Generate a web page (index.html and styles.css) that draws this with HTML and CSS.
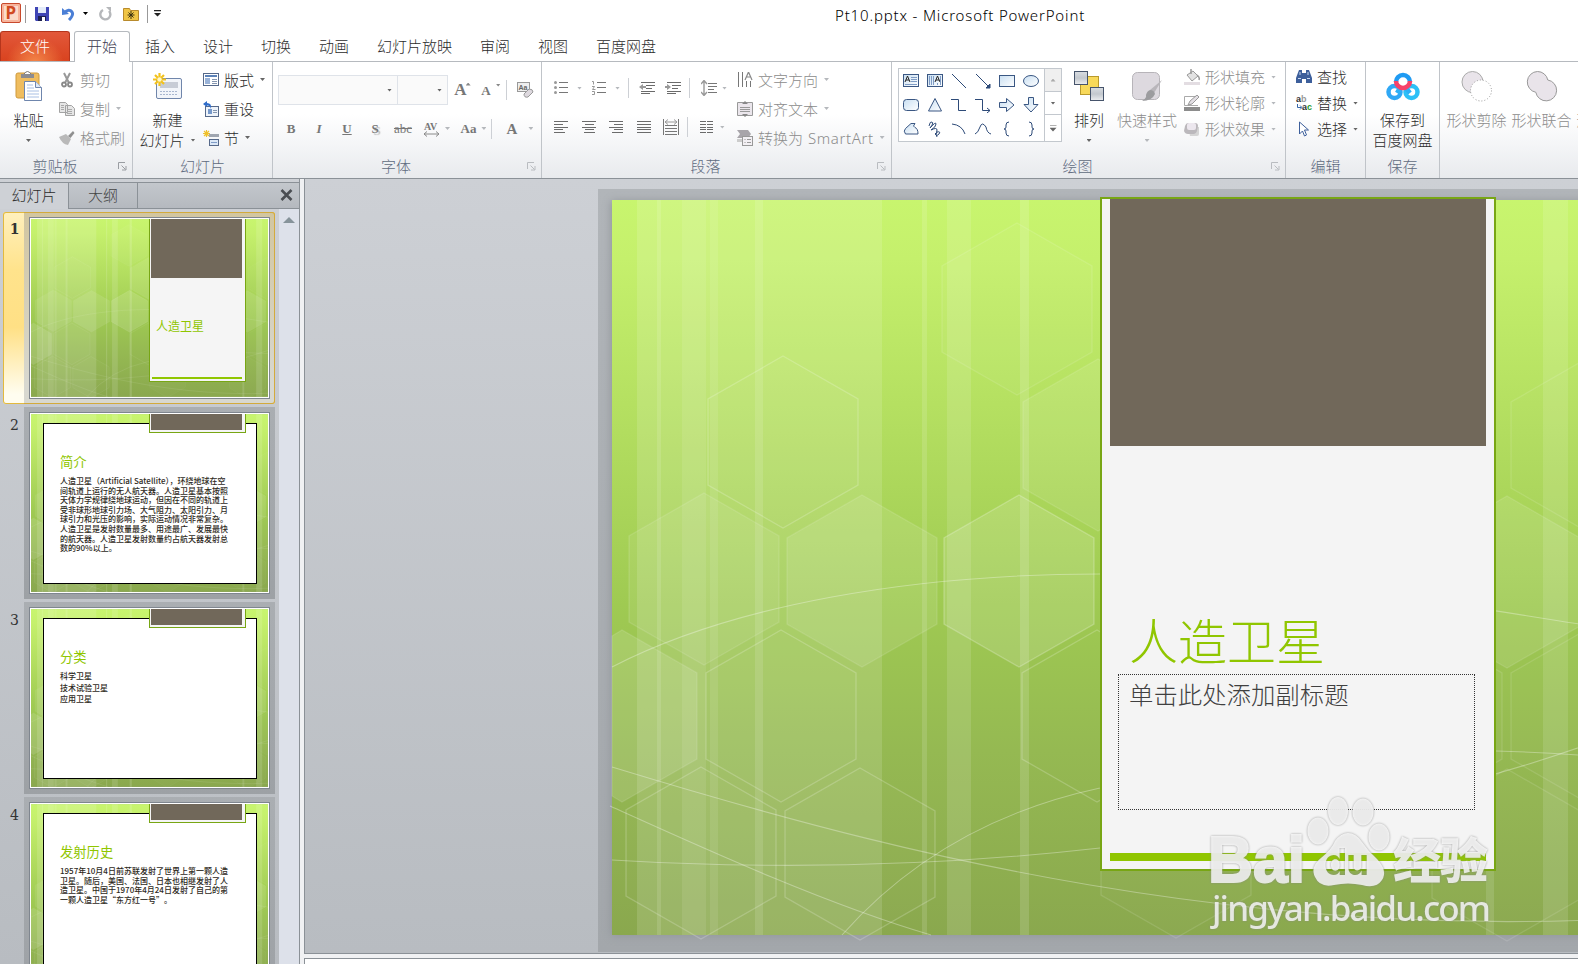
FILE: index.html
```html
<!DOCTYPE html>
<html lang="zh-CN">
<head>
    <meta charset="UTF-8">
    <title>Pt10.pptx - Microsoft PowerPoint</title>
    <link rel="stylesheet" href="styles.css">
</head>
<body>
    <!-- Shared slide background -->
    <svg class="defs" width="0" height="0">
        <defs>
            <linearGradient id="green" x1="0" y1="0" x2="0" y2="1">
                <stop offset="0" stop-color="#c8f56e"/>
                <stop offset="0.08" stop-color="#c5f06c"/>
                <stop offset="0.55" stop-color="#9fca52"/>
                <stop offset="0.75" stop-color="#95b952"/>
                <stop offset="1" stop-color="#8aa84e"/>
            </linearGradient>
            <linearGradient id="shape" x1="0" y1="0" x2="1" y2="1">
                <stop offset="0" stop-color="#c9dff2"/>
                <stop offset="1" stop-color="#fff"/>
            </linearGradient>
            <linearGradient id="steel" x1="0" y1="0" x2="0" y2="1">
                <stop offset="0" stop-color="#d9dde2"/>
                <stop offset="0.5" stop-color="#c3c8ce"/>
                <stop offset="1" stop-color="#eceef0"/>
            </linearGradient>
            <path id="hex" d="M0-86L75-43V43L0 86L-75 43V-43Z"/>
            <symbol id="slide-bg" viewBox="0 0 980 735" overflow="visible">
                <rect width="980" height="735" fill="url(#green)"/>
                <g fill="#fff">
                    <rect x="25" width="245" height="735" opacity=".13"/>
                    <rect x="45" width="4" height="735" opacity=".12"/>
                    <rect x="70" width="24" height="735" opacity=".09"/>
                    <rect x="98" width="8" height="735" opacity=".09"/>
                    <rect x="143" width="8" height="735" opacity=".12"/>
                    <rect x="310" width="5" height="735" opacity=".13"/>
                    <rect x="335" width="24" height="735" opacity=".12"/>
                    <rect x="408" width="9" height="735" opacity=".14"/>
                    <rect x="874" width="8" height="735" opacity=".12"/>
                    <rect x="931" width="25" height="735" opacity=".12"/>
                </g>
                <g fill="#fff" fill-opacity=".02" stroke="#fff" stroke-opacity=".12" stroke-width="1.3">
                    <use href="#hex" x="405" y="109" fill-opacity=".04"/>
                    <use href="#hex" x="171" y="242" stroke-opacity=".2"/>
                    <use href="#hex" x="92" y="379" fill-opacity=".08"/>
                    <use href="#hex" x="250" y="381" fill-opacity=".1"/>
                    <use href="#hex" x="407" y="381" fill-opacity=".13" stroke-opacity=".24"/>
                    <use href="#hex" x="486" y="245" fill-opacity=".09"/>
                    <use href="#hex" x="169" y="516" stroke-opacity=".2"/>
                    <use href="#hex" x="485" y="516" fill-opacity="0" stroke-opacity=".2"/>
                    <use href="#hex" x="89" y="653" stroke-opacity=".2"/>
                    <use href="#hex" x="248" y="654" stroke-opacity=".2"/>
                    <use href="#hex" x="564" y="652"/>
                    <use href="#hex" x="895" y="655"/>
                    <use href="#hex" x="815" y="516"/>
                    <path d="M981 430L974 430L899 473V559L974 602L981 600"/>
                    <use href="#hex" x="895" y="382" fill-opacity=".1"/>
                    <path d="M981 159L974 159L899 202V288L974 331L981 330"/>
                    <path d="M0 436L10 430L85 473V559L10 602L0 596Z" fill-opacity=".12"/>
                </g>
                <g fill="none" stroke="#fff" stroke-opacity=".32" stroke-width="1.1">
                    <path d="M0 467C120 405 300 374 488 374S800 398 980 426"/>
                    <path d="M0 567C190 625 330 660 478 685S800 727 980 720"/>
                    <path d="M-2 606C80 643 210 703 319 735"/>
                    <path d="M0 660Q250 675 488 648Q780 615 980 543"/>
                    <path d="M230 735Q330 622 488 588Q700 535 980 556"/>
                </g>
            </symbol>
        </defs>
    </svg>

    <header class="titlebar">
        <div class="quick">
            <svg width="21" height="21" viewBox="0 0 21 21"><rect x=".5" y=".5" width="19" height="19" rx="1.5" fill="#f7b49c" stroke="#c8492c"/><path d="M3 3h14v14H3z" fill="#fbdccb"/><text x="4.500" y="16" class="logo-p">P</text></svg>
            <span class="qsep"></span>
            <svg class="q-save" width="14" height="14" viewBox="0 0 14 14"><path d="M0 0h14v14H1l-1-1z" fill="#3f45b5"/><path d="M3 0h8v6H3z" fill="#e4ecf9"/><path d="M3 9h8v5H3z" fill="#1d2050"/><path d="M7 10h3v4H7z" fill="#fff"/></svg>
            <svg class="q-undo" width="13" height="14" viewBox="0 0 13 14"><path d="M2 6q5-5 8-1 2 3-3 8" fill="none" stroke="#4b7fd6" stroke-width="3"/><path d="M0 1v7l7-1z" fill="#4b7fd6"/></svg>
            <i class="dn black"></i>
            <svg class="q-redo" width="13" height="14" viewBox="0 0 13 14"><path d="M4 3a5 5 0 1 0 6 1" fill="none" stroke="#b5b7ba" stroke-width="2.4"/><path d="M7 0h5v5z" fill="#b5b7ba"/></svg>
            <svg class="q-folder" width="16" height="14" viewBox="0 0 16 14"><path d="M.5 1.500h6l1 2h8v10H.5z" fill="#f0c545" stroke="#b88a2c"/><path d="M8 4v8M4.500 8h7M5.500 5.500l5 5M10.500 5.500l-5 5" stroke="#3b3210"/></svg>
            <span class="qsep"></span>
            <svg width="7" height="7" viewBox="0 0 7 7"><path d="M0 0h7v1.300H0zM0 3h7L3.500 6.500z" fill="#222"/></svg>
        </div>
        <div class="doc-title">Pt10.pptx - Microsoft PowerPoint</div>
    </header>

    <nav class="tabs">
        <span class="file-tab">文件</span>
        <span class="tab active">开始</span>
        <span class="tab">插入</span>
        <span class="tab">设计</span>
        <span class="tab">切换</span>
        <span class="tab">动画</span>
        <span class="tab">幻灯片放映</span>
        <span class="tab">审阅</span>
        <span class="tab">视图</span>
        <span class="tab">百度网盘</span>
    </nav>

    <div class="ribbon">
        <section class="group g-clip">
            <div class="tools">
                <div class="big">
                    <svg width="28" height="32" viewBox="0 0 28 32"><rect x="1" y="3" width="23" height="25" rx="2" fill="#efbd5f" stroke="#cf9a3d"/><path d="M6 4h13v4H6z" fill="#8c8c90"/><path d="M9 4q3.500-5 7 0" fill="#fff" stroke="#777"/><path d="M9.500 11.500h11l6 6v13h-17z" fill="#fff" stroke="#6f86ad"/><path d="M20.500 11.500v6h6" fill="#dfe8f5" stroke="#6f86ad"/><path d="M12 15h6M12 18h7M12 21h12M12 24h12M12 27h12" stroke="#a9c0e4"/></svg>
                    <b>粘贴</b><i class="dn"></i>
                </div>
                <div class="stack">
                    <div class="row off"><svg width="16" height="16" viewBox="0 0 16 16"><path d="M5 1l5 10M11 1L6 11" stroke="#999" stroke-width="2"/><circle cx="5" cy="12.500" r="2" fill="none" stroke="#888" stroke-width="1.800"/><circle cx="11" cy="12.500" r="2" fill="none" stroke="#888" stroke-width="1.800"/></svg>剪切</div>
                    <div class="row off"><svg width="16" height="16" viewBox="0 0 16 16"><path d="M.5 1.500h6l2 2v8h-8zM6.500 4.500h6l3 3v7h-9z" fill="#e6e6e6" stroke="#a3a3a3"/><path d="M2 4.500h3M2 6.500h3M2 8.500h3M8 8.500h5M8 10.500h5M8 12.500h5" stroke="#aaa"/></svg>复制<i class="dn"></i></div>
                    <div class="row off"><svg width="16" height="16" viewBox="0 0 16 16"><path d="M0 7l7-3 5 5-3 6q-6-1-9-8z" fill="#b9b9b9"/><path d="M9 6l5-5 1.500 2-4 5z" fill="#8f8f8f"/></svg>格式刷</div>
                </div>
            </div>
            <div class="label">剪贴板<svg class="launch" width="9" height="9" viewBox="0 0 9 9"><path d="M.5 7V.5H7M3.500 3.500l4 4M8 4v4H4" fill="none" stroke="currentColor"/></svg></div>
        </section>

        <section class="group g-slides">
            <div class="tools">
                <div class="big">
                    <svg width="30" height="32" viewBox="0 0 30 32"><rect x="3.500" y="8.500" width="25" height="20" rx="1.500" fill="#f2f5fa" stroke="#7086ab"/><path d="M7 12h18v6H7z" fill="#c7ccd6"/><path d="M7 21.500h18M7 24.500h18" stroke="#a9b7d0" stroke-dasharray="2 1"/><path d="M6.500 3v13M0 9.500h13M2 5l9 9M11 5l-9 9" stroke="#f3c21c" stroke-width="2.200"/><circle cx="6.500" cy="9.500" r="2.200" fill="#fff8c8"/></svg>
                    <b>新建</b><b class="two">幻灯片<i class="dn"></i></b>
                </div>
                <div class="stack">
                    <div class="row"><svg width="16" height="16" viewBox="0 0 16 16"><rect x=".5" y="1.500" width="15" height="12" fill="#fff" stroke="#56698a"/><path d="M2 3h12v2H2z" fill="#5c82b8"/><path d="M2 6h5v6H2z" fill="#9ab3d8"/><path d="M9 7.500h5M9 9.500h5M9 11.500h5" stroke="#8596b0"/></svg>版式<i class="dn"></i></div>
                    <div class="row"><svg width="16" height="16" viewBox="0 0 16 16"><rect x="2.500" y="5.500" width="13" height="10" fill="#eef3fa" stroke="#56698a"/><path d="M5 8h4v5H5z" fill="#7699cb"/><path d="M10 9.500h4M10 11.500h4" stroke="#8596b0"/><path d="M0 3l4-3v2q5 0 4 6Q7 4 4 4.500V6z" fill="#2f6cc9"/></svg>重设</div>
                    <div class="row"><svg width="16" height="16" viewBox="0 0 16 16"><path d="M6 4h10v3H6z" fill="#a0a6b0"/><rect x="6.500" y="9.500" width="9" height="6" fill="#dce8f7" stroke="#56698a"/><path d="M8 12.500h6" stroke="#7f9cc8"/><path d="M3.500 0v7M0 3.500h7M1 1l5 5M6 1L1 6" stroke="#efc02a" stroke-width="1.200"/></svg>节<i class="dn"></i></div>
                </div>
            </div>
            <div class="label">幻灯片</div>
        </section>

        <section class="group g-font">
            <div class="tools col">
                <div class="line first">
                    <span class="combo wide"><i class="dn"></i></span><span class="combo"><i class="dn"></i></span>
                    <span class="cell serif big-a">A<i class="up"></i></span>
                    <span class="cell serif small-a">A<i class="dn"></i></span>
                    <span class="vsep"></span>
                    <svg class="eraser" width="17" height="17" viewBox="0 0 17 17"><rect x=".5" y=".5" width="12" height="9" fill="#eee" stroke="#999"/><text x="1.500" y="8" class="mini">Aa</text><path d="M7 12l5-5q4 0 4 3l-5 5q-4 1-4-3z" fill="#ddd8de" stroke="#999"/></svg>
                </div>
                <div class="line second serif">
                    <span class="cell bold">B</span>
                    <span class="cell ital">I</span>
                    <span class="cell under">U</span>
                    <span class="cell shadow">S</span>
                    <span class="cell strike">abc</span>
                    <span class="cell av"><svg width="17" height="16" viewBox="0 0 17 16"><text x="1" y="9" class="avt">AV</text><path d="M1 13h15M4 10.500L1 13l3 2.500M13 10.500l3 2.500-3 2.500" fill="none" stroke="#8a8a8a"/></svg><i class="dn"></i></span>
                    <span class="cell aa">Aa<i class="dn"></i></span>
                    <span class="vsep"></span>
                    <span class="cell fc">A<i class="dn"></i></span>
                </div>
            </div>
            <div class="label">字体<svg class="launch" width="9" height="9" viewBox="0 0 9 9"><path d="M.5 7V.5H7M3.500 3.500l4 4M8 4v4H4" fill="none" stroke="currentColor"/></svg></div>
        </section>

        <section class="group g-para">
            <div class="tools">
                <div class="col para-tools">
                    <div class="line first">
                        <svg width="14" height="14" viewBox="0 0 14 14"><path d="M5 1.500h9M5 6.500h9M5 11.500h9" stroke="#777"/><circle cx="1.500" cy="1.500" r="1.500" fill="#999"/><circle cx="1.500" cy="6.500" r="1.500" fill="#999"/><circle cx="1.500" cy="11.500" r="1.500" fill="#999"/></svg><i class="dn"></i>
                        <svg class="m2" width="14" height="14" viewBox="0 0 14 14"><path d="M5 1.500h9M5 6.500h9M5 11.500h9" stroke="#777"/><path d="M0 .5h1.500v3M0 5.500h2.500L.5 8.500h3M0 10.500h2.500v3H0" fill="none" stroke="#999"/></svg><i class="dn"></i>
                        <span class="vsep"></span>
                        <svg class="m3" width="16" height="14" viewBox="0 0 16 14"><path d="M2 1.500h14M7 4.500h9M7 7.500h6M2 10.500h14M2 12.500h9" stroke="#6b6b6b"/><path d="M0 6l4-3v2h3v2H4v2z" fill="#999"/></svg>
                        <svg class="m4" width="16" height="14" viewBox="0 0 16 14"><path d="M2 1.500h14M7 4.500h9M7 7.500h6M2 10.500h14M2 12.500h9" stroke="#6b6b6b"/><path d="M6 6L2 3v2H0v2h2v2z" fill="#999"/></svg>
                        <span class="vsep"></span>
                        <svg class="m5" width="16" height="16" viewBox="0 0 16 16"><path d="M7 3.500h9M7 6.500h9M7 9.500h6M7 12.500h9" stroke="#777"/><path d="M3 1v14M0 4l3-3.500L6 4M0 12l3 3.500L6 12" fill="none" stroke="#999" stroke-width="1.400"/></svg><i class="dn"></i>
                    </div>
                    <div class="line second">
                        <svg width="14" height="12" viewBox="0 0 14 12"><path d="M0 .5h14M0 3.500h9M0 6.500h14M0 8.500h9M0 11.500h11" stroke="#6b6b6b"/></svg>
                        <svg width="14" height="12" viewBox="0 0 14 12"><path d="M0 .5h14M3 3.500h9M0 6.500h14M3 8.500h9M2 11.500h11" stroke="#6b6b6b"/></svg>
                        <svg width="14" height="12" viewBox="0 0 14 12"><path d="M0 .5h14M5 3.500h9M0 6.500h14M5 8.500h9M3 11.500h11" stroke="#6b6b6b"/></svg>
                        <svg width="14" height="12" viewBox="0 0 14 12"><path d="M0 .5h14M0 3.500h14M0 6.500h14M0 8.500h14M0 11.500h14" stroke="#6b6b6b"/></svg>
                        <svg class="dist" width="16" height="16" viewBox="0 0 16 16"><path d="M.5 0v16M15.500 0v16M2 6.500h12M2 9.500h12M2 12.500h12M2 15.500h12" stroke="#777"/><path d="M2 3h12M5 .5L2 3l3 2.500M11 .5L14 3l-3 2.500" fill="none" stroke="#999"/></svg>
                        <span class="vsep"></span>
                        <svg class="cols" width="13" height="12" viewBox="0 0 13 12"><path d="M0 .5h6M0 3.500h6M0 6.500h6M0 8.500h6M0 11.500h6M7 .5h6M7 3.500h6M7 6.500h6M7 8.500h6M7 11.500h6" stroke="#6b6b6b"/></svg><i class="dn"></i>
                    </div>
                </div>
                <div class="stack">
                    <div class="row off"><svg width="16" height="16" viewBox="0 0 16 16"><path d="M1.500 0v15M5.500 0v15M9.500 9v6M13.500 9v6" stroke="#777"/><path d="M8 8l3.500-8L15 8M9.500 5h4" fill="none" stroke="#888" stroke-width="1.200"/></svg>文字方向<i class="dn"></i></div>
                    <div class="row off"><svg width="16" height="16" viewBox="0 0 16 16"><path d="M.5 1.500h15v13H.5z" fill="#ebe6ec" stroke="#999"/><path d="M3 6.500h10M3 8.500h10M3 10.500h10" stroke="#999"/><path d="M8 0l3 3H5zM8 16l3-3H5z" fill="#888"/></svg>对齐文本<i class="dn"></i></div>
                    <div class="row off"><svg width="16" height="16" viewBox="0 0 16 16"><path d="M0 0h11l3 4-3 4H0l3-4z" fill="#a8a5aa"/><path d="M0 9h7v3H0z" fill="#ccc"/><rect x="5.500" y="6.500" width="10" height="9" fill="#f3f0f4" stroke="#999"/><path d="M7.500 9.500h1M10 9.500h4M7.500 12.500h1M10 12.500h4" stroke="#999"/></svg>转换为 <span class="smart">SmartArt</span><i class="dn"></i></div>
                </div>
            </div>
            <div class="label">段落<svg class="launch" width="9" height="9" viewBox="0 0 9 9"><path d="M.5 7V.5H7M3.500 3.500l4 4M8 4v4H4" fill="none" stroke="currentColor"/></svg></div>
        </section>

        <section class="group g-draw">
            <div class="tools">
                <div class="gallery">
                    <div class="shapes">
                        <svg viewBox="0 0 16 16"><rect x=".5" y="1.500" width="15" height="12" fill="url(#shape)" stroke="#3a5783"/><path d="M2 9l2.500-6L7 9M3 7h3" fill="none" stroke="#222"/><path d="M8 4.500h6M8 6.500h6M8 8.500h6M2 11.500h12" stroke="#7f9cc5"/></svg>
                        <svg viewBox="0 0 16 16"><rect x=".5" y="1.500" width="15" height="12" fill="url(#shape)" stroke="#3a5783"/><path d="M8 9l2.500-6L13 9M9 7h3" fill="none" stroke="#222"/><path d="M2.500 3v9M4.500 3v9M6.500 3v9M10.500 10v2M13.500 3v9" stroke="#7f9cc5"/></svg>
                        <svg viewBox="0 0 16 16"><path d="M1 1l14 14" stroke="#2d4a78"/></svg>
                        <svg viewBox="0 0 16 16"><path d="M1 1l13 13M15 11v4h-4z" stroke="#2d4a78" fill="#2d4a78"/></svg>
                        <svg viewBox="0 0 16 16"><rect x=".5" y="2.500" width="15" height="11" fill="url(#shape)" stroke="#3a5783"/></svg>
                        <svg viewBox="0 0 16 16"><ellipse cx="8" cy="8" rx="7.500" ry="5.500" fill="url(#shape)" stroke="#3a5783"/></svg>
                        <svg viewBox="0 0 16 16"><rect x=".5" y="2.500" width="15" height="11" rx="3" fill="url(#shape)" stroke="#3a5783"/></svg>
                        <svg viewBox="0 0 16 16"><path d="M8 1.500L14.500 14h-13z" fill="url(#shape)" stroke="#3a5783"/></svg>
                        <svg viewBox="0 0 16 16"><path d="M0 2.500h7.500v11H15" fill="none" stroke="#2d4a78"/></svg>
                        <svg viewBox="0 0 16 16"><path d="M0 2.500h7.500v11H15M12 11l3 2.500-3 2.500" fill="none" stroke="#2d4a78"/></svg>
                        <svg viewBox="0 0 16 16"><path d="M.5 5.500h7V1.500L15 8l-7.500 6.500v-4h-7z" fill="url(#shape)" stroke="#3a5783"/></svg>
                        <svg viewBox="0 0 16 16"><path d="M5.500.5h5v7h4.500L8 15 1 7.500h4.500z" fill="url(#shape)" stroke="#3a5783"/></svg>
                        <svg viewBox="0 0 16 16"><path d="M2.500 7.500L8 2.500h4q-3 3 0 4 3 1 3 6.500H2.500q-2.500-3 0-5.500z" fill="url(#shape)" stroke="#3a5783"/></svg>
                        <svg viewBox="0 0 16 16"><path d="M2 5q1-5 3-4t-2 6q6-7 6-4T4 9q6-3 6 0t-2 4q2 3 4 0t-2-2q-2 2 0 5" fill="none" stroke="#2d4a78"/></svg>
                        <svg viewBox="0 0 16 16"><path d="M1 3q10 1 13 10" fill="none" stroke="#2d4a78"/></svg>
                        <svg viewBox="0 0 16 16"><path d="M0 13q3-1 5-7t6 0q1 6 5 7" fill="none" stroke="#2d4a78"/></svg>
                        <svg viewBox="0 0 16 16"><path d="M10 1Q7 1 7 4v2q0 2-2 2 2 0 2 2v2q0 3 3 3" fill="none" stroke="#2d4a78"/></svg>
                        <svg viewBox="0 0 16 16"><path d="M6 1q3 0 3 3v2q0 2 2 2-2 0-2 2v2q0 3-3 3" fill="none" stroke="#2d4a78"/></svg>
                    </div>
                    <div class="scroller"><span class="dim"><i class="up"></i></span><span><i class="dn"></i></span><span><i class="dn more"></i></span></div>
                </div>
                <div class="big arrange">
                    <svg width="31" height="32" viewBox="0 0 31 32"><rect x="6.500" y="6.500" width="18" height="18" fill="#f8d95a" stroke="#b99a2c"/><rect x=".5" y="1.500" width="13" height="13" fill="url(#steel)" stroke="#46546b"/><rect x="16.500" y="17.500" width="13" height="13" fill="url(#steel)" stroke="#46546b"/></svg>
                    <b>排列</b><i class="dn"></i>
                </div>
                <div class="big off quick-style">
                    <svg width="30" height="32" viewBox="0 0 30 32"><rect x=".5" y="2.500" width="27" height="27" rx="5" fill="#ddd9df" stroke="#b7b4b9"/><path d="M30 10l-8 13-4-3z" fill="#b9b6bb"/><path d="M18 20q4 0 5 4-3 7-13 7 5-3 4-6 1-4 4-5z" fill="#9c9c9f"/></svg>
                    <b>快速样式</b><i class="dn"></i>
                </div>
                <div class="stack tight">
                    <div class="row off"><svg width="16" height="16" viewBox="0 0 16 16"><path d="M3 6l6-4 5 5-6 5z" fill="#e2e2e2" stroke="#999"/><path d="M7 5V0M13 6q3 2 2 5" stroke="#999" fill="none" stroke-width="1.500"/><path d="M0 13h16v3H0z" fill="#e3dde2"/></svg>形状填充<i class="dn"></i></div>
                    <div class="row off"><svg width="16" height="16" viewBox="0 0 16 16"><path d="M13 1.500H.5v9H14" fill="none" stroke="#aaa"/><path d="M4 10l2-4 7-6 2 2-7 7z" fill="#e3dfe4" stroke="#999"/><path d="M0 12h16v4H0z" fill="#8c8c8c"/></svg>形状轮廓<i class="dn"></i></div>
                    <div class="row off"><svg width="16" height="16" viewBox="0 0 16 16"><path d="M4 6h11v7q0 2-2 2H6z" fill="#d5d5d5"/><path d="M4 2h7q3 0 3 3l-1 5q-1 3-3 3H4q-3 0-4-3l1-5q1-3 3-3z" fill="#bbb8bc"/><rect x="3" y="2" width="9" height="7" rx="2" fill="#ece7ee"/></svg>形状效果<i class="dn"></i></div>
                </div>
            </div>
            <div class="label">绘图<svg class="launch" width="9" height="9" viewBox="0 0 9 9"><path d="M.5 7V.5H7M3.500 3.500l4 4M8 4v4H4" fill="none" stroke="currentColor"/></svg></div>
        </section>

        <section class="group g-edit">
            <div class="tools">
                <div class="stack tight">
                    <div class="row"><svg width="16" height="16" viewBox="0 0 16 16"><path d="M3 1h3v3h4V1h3l3 8v5h-6v-4H6v4H0V9z" fill="#3d5f9b"/><path d="M2 9.500h3M11 9.500h3M4 3v3M12 3v3" stroke="#c8d8f0"/></svg>查找</div>
                    <div class="row"><svg class="replace" width="16" height="16" viewBox="0 0 16 16"><text x="0" y="7" class="ab">a<tspan fill="#999">b</tspan></text><text x="6" y="15" class="ab">a<tspan fill="#1f9a2c">c</tspan></text><path d="M1.500 9v3.500h4M4 10.500l2 2-2 2" fill="none" stroke="#3566a8"/></svg>替换<i class="dn"></i></div>
                    <div class="row"><svg width="16" height="16" viewBox="0 0 16 16"><path d="M3.500 1v12l3-3 2 5 2-1-2-5h4z" fill="#fff" stroke="#3d5f9b"/></svg>选择<i class="dn"></i></div>
                </div>
            </div>
            <div class="label">编辑</div>
        </section>

        <section class="group g-save">
            <div class="tools">
                <div class="big">
                    <svg width="34" height="32" viewBox="0 0 34 32"><g fill="none" stroke-width="4.500"><circle cx="8.500" cy="22" r="6" stroke="#2fa8f5"/><circle cx="25.500" cy="22" r="6" stroke="#2cc0f7"/><path d="M10 12a7 7 0 1 1 14 0" stroke="#1f9bf3"/><path d="M14 18l-3 5M20 18l4 5" stroke="#2cb0f7"/><path d="M10 11a7 7 0 0 0 14 0" stroke="#f5426a"/></g></svg>
                    <b>保存到</b><b class="two">百度网盘</b>
                </div>
            </div>
            <div class="label">保存</div>
        </section>

        <section class="group g-merge">
            <div class="tools">
                <div class="big off">
                    <svg width="32" height="32" viewBox="0 0 32 32"><circle cx="11.500" cy="12" r="10.500" fill="#e9e4ea" stroke="#aaa"/><circle cx="20" cy="20.500" r="10.500" fill="#fff" stroke="#999" stroke-dasharray="1 2"/></svg>
                    <b>形状剪除</b>
                </div>
                <div class="big off">
                    <svg width="32" height="32" viewBox="0 0 32 32"><path d="M11.500 1.500a10.500 10.500 0 0 1 10.300 8.500a10.500 10.500 0 1 1-12 12.300A10.500 10.500 0 0 1 11.500 1.500z" fill="#e9e4ea" stroke="#999"/></svg>
                    <b>形状联合</b>
                </div>
                <div class="big off">
                    <svg width="32" height="32" viewBox="0 0 32 32"></svg>
                    <b>形状交点</b>
                </div>
            </div>
            <div class="label"></div>
        </section>
    </div>

    <main class="workspace">
        <aside class="panel">
            <div class="panel-tabs">
                <span class="ptab on">幻灯片</span>
                <span class="ptab">大纲</span>
                <svg class="close" width="13" height="12" viewBox="0 0 13 12"><path d="M1.500 1l10 10M11.500 1l-10 10" stroke="#4a4d52" stroke-width="2.600"/></svg>
            </div>
            <div class="panel-body">
                <div class="thumbs">
                    <div class="thumb selected">
                        <span class="num">1</span>
                        <div class="shade"><div class="frame">
                            <svg class="bg" width="237" height="178"><use href="#slide-bg" width="237" height="178"/></svg>
                            <div class="cover"><div class="cover-photo"></div><div class="cover-title">人造卫星</div><div class="cover-bar"></div></div>
                        </div></div>
                    </div>
                    <div class="thumb">
                        <span class="num">2</span>
                        <div class="shade"><div class="frame">
                            <svg class="bg" width="237" height="178"><use href="#slide-bg" width="237" height="178"/></svg>
                            <div class="card"><h3>简介</h3>
                                <p>人造卫星（Artificial Satellite），环绕地球在空<br>间轨道上运行的无人航天器。人造卫星基本按照<br>天体力学规律绕地球运动，但因在不同的轨道上<br>受非球形地球引力场、大气阻力、太阳引力、月<br>球引力和光压的影响，实际运动情况非常复杂。<br>人造卫星是发射数量最多、用途最广、发展最快<br>的航天器。人造卫星发射数量约占航天器发射总<br>数的90%以上。</p></div>
                            <div class="flap"></div>
                        </div></div>
                    </div>
                    <div class="thumb">
                        <span class="num">3</span>
                        <div class="shade"><div class="frame">
                            <svg class="bg" width="237" height="178"><use href="#slide-bg" width="237" height="178"/></svg>
                            <div class="card"><h3>分类</h3>
                                <p class="list">科学卫星<br>技术试验卫星<br>应用卫星</p></div>
                            <div class="flap"></div>
                        </div></div>
                    </div>
                    <div class="thumb">
                        <span class="num">4</span>
                        <div class="shade"><div class="frame">
                            <svg class="bg" width="237" height="178"><use href="#slide-bg" width="237" height="178"/></svg>
                            <div class="card"><h3>发射历史</h3>
                                <p>1957年10月4日前苏联发射了世界上第一颗人造<br>卫星。随后，美国、法国、日本也相继发射了人<br>造卫星。中国于1970年4月24日发射了自己的第<br>一颗人造卫星“东方红一号”。</p></div>
                            <div class="flap"></div>
                        </div></div>
                    </div>
                </div>
                <div class="scrollbar"><svg width="12" height="6" viewBox="0 0 12 6"><path d="M6 0l6 6H0z" fill="#86939a"/></svg></div>
            </div>
        </aside>
        <div class="editor">
            <div class="canvas">
                <div class="stage">
                    <div class="slide">
                        <svg class="bg" width="980" height="735"><use href="#slide-bg" width="980" height="735"/></svg>
                        <div class="title-panel">
                            <div class="photo"></div>
                            <h1>人造卫星</h1>
                            <div class="subtitle">单击此处添加副标题</div>
                            <div class="bar"></div>
                        </div>
                    </div>
                </div>
            </div>
            <div class="notes"></div>
            <svg class="watermark" width="300" height="150" viewBox="0 0 300 150">
                <mask id="du-cut">
                    <rect width="300" height="150" fill="#fff"/>
                    <text class="wm-du" x="123" y="84" textLength="45">du</text>
                </mask>
                <g class="wm-art">
                    <text class="wm-bai" x="7" y="91" textLength="97" lengthAdjust="spacingAndGlyphs">Bai</text>
                    <ellipse cx="117" cy="40" rx="10.500" ry="13.500"/>
                    <ellipse cx="137" cy="20" rx="10" ry="14"/>
                    <ellipse cx="162" cy="21" rx="10.500" ry="13.500"/>
                    <ellipse cx="178" cy="46" rx="10.500" ry="13.500"/>
                    <path mask="url(#du-cut)" d="M147 42Q155 42 161 51T176 68Q187 80 181 89T161 94Q147 91 133 94T114 86Q109 76 120 67T134 50Q140 42 147 42z"/>
                    <text class="wm-cn" x="192" y="87" textLength="95">经验</text>
                    <text class="wm-url" x="11" y="130" textLength="279">jingyan.baidu.com</text>
                </g>
            </svg>
        </div>
    </main>
</body>
</html>
```

FILE: styles.css
```css
* {
    box-sizing: border-box;
}
body {
    margin: 0;
    width: 1578px;
    height: 964px;
    overflow: hidden;
    background-color: #fff;
    color: #2b2b2b;
    font-family: "Noto Sans", "Noto Sans CJK SC", sans-serif;
    font-size: 15px;
    font-weight: 300;
    line-height: 20px;
    white-space: nowrap;
}
svg {
    display: block;
    flex: none;
}
.defs {
    position: absolute;
}
b {
    font-weight: 300;
}

/* Title bar */
.titlebar {
    height: 31px;
    position: relative;
}
.quick {
    display: flex;
    align-items: center;
    height: 27px;
    padding-left: 1px;
}
.logo-p {
    fill: #d04a22;
    font: 700 17px "Noto Sans", sans-serif;
}
.qsep {
    width: 1px;
    height: 18px;
    margin-left: 3px;
    background-color: #999;
}
.q-save {
    margin-left: 9px;
}
.q-undo {
    margin-left: 13px;
}
.quick .dn {
    margin-left: 8px;
}
.q-redo {
    margin-left: 11px;
}
.q-folder {
    margin-left: 11px;
}
.q-folder + .qsep {
    margin-left: 8px;
}
.quick .qsep + svg:last-child {
    margin-left: 6px;
}
.doc-title {
    position: absolute;
    left: 835px;
    top: 5px;
    color: #000;
    letter-spacing: 0.83px;
}

/* Dropdown arrows */
.dn, .up {
    display: inline-block;
    flex: none;
    width: 5px;
    height: 3px;
    background-color: #666;
    clip-path: polygon(0 0, 100% 0, 50% 100%);
}
.up {
    background-color: #aaa;
    clip-path: polygon(50% 0, 100% 100%, 0 100%);
}
.dn.black {
    background-color: #000;
}
.dn.more {
    width: 7px;
    height: 7px;
    clip-path: polygon(0 0, 100% 0, 100% 16%, 0 16%, 0 45%, 100% 45%, 50% 100%, 0 45%);
}
.off .dn, .second .dn, .para-tools .dn {
    background-color: #b5b8bc;
}

/* Ribbon tabs */
.tabs {
    display: flex;
    height: 31px;
    border-bottom: 1px solid #b6babf;
}
.file-tab {
    width: 70px;
    height: 30px;
    margin-right: 4px;
    border: 1px solid #b5351c;
    border-bottom: none;
    border-radius: 3px 3px 0 0;
    background: radial-gradient(ellipse at 50% 110%, #f58a4b, transparent 60%), linear-gradient(#e2583a, #d9431f);
    color: #fff;
    line-height: 29px;
    text-align: center;
}
.tab {
    padding: 0 14px;
    line-height: 31px;
}
.tab.active {
    width: 56px;
    height: 31px;
    margin-right: 1px;
    padding: 0 12px;
    border: 1px solid #b6babf;
    border-bottom: none;
    border-radius: 3px 3px 0 0;
    background-color: #fff;
    color: #3b3b50;
    line-height: 29px;
}

/* Ribbon */
.ribbon {
    display: flex;
    height: 117px;
    border-bottom: 1px solid #8b9197;
    background: linear-gradient(#fff 0, #fff 45%, #f4f5f7 72%, #e8eaed);
}
.group {
    flex: none;
    border-right: 1px solid #c0c4c9;
    overflow: hidden;
}
.tools {
    display: flex;
    height: 92px;
}
.label {
    position: relative;
    height: 24px;
    color: #5f6b80;
    line-height: 24px;
    text-align: center;
}
.launch {
    position: absolute;
    right: 5px;
    top: 8px;
    color: #9a9da2;
}
.g-font .launch, .g-para .launch, .g-draw .launch {
    color: #b9bcc0;
}
.off {
    color: #8c8c8c;
}
.big {
    display: flex;
    flex-direction: column;
    align-items: center;
    padding-top: 8px;
}
.big svg {
    margin-bottom: 8px;
}
.big > .dn {
    margin-top: 9px;
}
.two {
    display: flex;
    align-items: center;
}
.two .dn {
    margin-left: 6px;
}
.stack {
    padding-top: 3px;
}
.row {
    display: flex;
    align-items: center;
    height: 29px;
}
.row svg {
    margin-right: 5px;
}
.row .dn {
    margin-left: 6px;
}
.stack.tight {
    padding-top: 2px;
}
.tight .row {
    height: 26px;
}
.g-clip {
    width: 133px;
}
.g-clip .label {
    padding-right: 22px;
}
.g-clip .big {
    width: 57px;
}
.g-clip .stack {
    padding-left: 2px;
}
.g-slides {
    width: 140px;
}
.g-slides .big {
    width: 69px;
}
.g-slides .stack {
    padding-left: 1px;
}
.g-font {
    width: 269px;
}
.g-font .label, .g-para .label, .g-draw .label {
    padding-right: 22px;
}
.col {
    flex-direction: column;
}
.line {
    display: flex;
    align-items: center;
}
.vsep {
    flex: none;
    width: 1px;
    height: 20px;
    background-color: #cdd0d5;
}

/* Font group */
.g-font .first {
    padding: 13px 0 0 5px;
    height: 43px;
}
.combo {
    display: flex;
    flex: none;
    align-items: center;
    justify-content: flex-end;
    width: 51px;
    height: 30px;
    padding-right: 5px;
    border: 1px solid #dfe3e9;
    background-color: #fafafa;
}
.combo.wide {
    width: 120px;
    margin-right: -1px;
}
.serif {
    color: #777;
    font-family: "Liberation Serif", serif;
    font-weight: 700;
}
.cell {
    display: flex;
    flex: none;
    align-items: center;
    justify-content: center;
    width: 28px;
    height: 22px;
}
.big-a {
    width: 29px;
    font-size: 17px;
}
.small-a {
    width: 25px;
    padding: 2px 0 0 3px;
    font-size: 13px;
}
.big-a .up, .small-a .dn {
    margin: -12px 0 0 -1px;
    background-color: #888;
}
.g-font .first .vsep {
    margin-left: 4px;
}
.eraser {
    margin-left: 10px;
}
.mini {
    fill: #666;
    font: 700 7px "Liberation Sans", sans-serif;
}
.avt {
    fill: #777;
    font: 700 10px "Liberation Serif", serif;
}
.g-font .second {
    height: 44px;
    padding: 3px 0 0 4px;
    font-size: 13px;
}
.ital {
    font-style: italic;
}
.under {
    text-decoration: underline;
}
.shadow {
    text-shadow: 2px 2px 1px #bbb;
}
.strike {
    font-weight: 400;
    text-decoration: line-through;
}
.cell .dn {
    margin-left: 5px;
}
.av {
    width: 39px;
}
.aa {
    width: 35px;
}
.fc {
    width: 56px;
    font-size: 15px;
}
.fc .dn {
    margin-left: 11px;
}

/* Paragraph group */
.g-para {
    width: 350px;
}
.para-tools {
    width: 195px;
    padding-left: 12px;
}
.para-tools .first {
    height: 26px;
    margin-top: 13px;
}
.para-tools .second {
    height: 26px;
    margin-top: 13px;
}
.para-tools .first .dn {
    margin-left: 9px;
}
.m2 {
    margin-left: 10px;
}
.para-tools .vsep {
    margin-left: 8px;
}
.m3 {
    margin-left: 10px;
}
.m4 {
    margin-left: 10px;
}
.m5 {
    margin-left: 11px;
}
.para-tools .m5 + .dn {
    margin-left: 5px;
}
.para-tools .second svg + svg {
    margin-left: 13.600px;
}
.para-tools .second svg + .dist {
    margin-left: 12px;
}
.cols {
    margin-left: 12px;
}
.cols + .dn {
    margin-left: 7px;
}
.smart {
    margin-left: 5px;
    letter-spacing: 0.6px;
}

/* Drawing group */
.g-draw {
    width: 394px;
}
.gallery {
    display: flex;
    width: 164px;
    height: 74px;
    margin: 6px 0 0 6px;
    border: 1px solid #c3c8ce;
    background-color: #fff;
}
.shapes {
    display: grid;
    grid-template-columns: repeat(6, 24px);
    grid-template-rows: repeat(3, 24px);
    width: 145px;
    place-items: center;
}
.shapes svg {
    width: 16px;
    height: 16px;
}
.scroller {
    display: grid;
    width: 17px;
    border-left: 1px solid #c3c8ce;
}
.scroller span {
    display: flex;
    align-items: center;
    justify-content: center;
    border-bottom: 1px solid #c3c8ce;
}
.scroller span:last-child {
    border-bottom: none;
}
.scroller .dim {
    background-color: #efefef;
}
.arrange {
    width: 54px;
}
.quick-style {
    width: 62px;
}
.g-draw .stack {
    margin-left: 6px;
}

.g-edit {
    width: 80px;
}
.g-edit .stack {
    margin-left: 10px;
}
.replace {
    overflow: visible;
}
.ab {
    fill: #333;
    font: 700 9px "Liberation Sans", sans-serif;
}
.g-save {
    width: 74px;
}
.g-save .big {
    width: 73px;
}
.g-merge {
    width: 200px;
    padding-left: 4px;
    border: none;
}
.g-merge .big {
    width: 65px;
    flex: none;
}

/* Workspace */
.workspace {
    display: flex;
    height: 785px;
    background: linear-gradient(#cdd0d5, #b8bcc1);
}
.panel {
    width: 300px;
    border-right: 1px solid #8b9197;
    padding-top: 3px;
}
.panel-tabs {
    display: flex;
    height: 27px;
    border-top: 1px solid #8b9197;
    border-bottom: 1px solid #8b9197;
    background: linear-gradient(#c3c7cc, #b5b9bf);
}
.ptab {
    width: 69px;
    border-right: 1px solid #8b9197;
    color: #444;
    line-height: 25px;
    text-align: center;
}
.ptab.on {
    height: 26px;
    background-color: #ced1d6;
    color: #2b2b2b;
}
.close {
    margin: 6px 0 0 142px;
}
.panel-body {
    display: flex;
    height: 755px;
    overflow: hidden;
}
.thumbs {
    width: 279px;
    padding: 3px 0 0 3px;
}
.scrollbar {
    width: 20px;
    padding: 8px 0 0 4px;
    background-color: #dde1ea;
}
.thumb {
    display: flex;
    width: 272px;
    height: 192px;
    margin-bottom: 3px;
}
.num {
    width: 21px;
    padding: 8px 0 0 2px;
    color: #333;
    font-family: "DejaVu Serif", serif;
    font-size: 14px;
    font-weight: 400;
    text-align: center;
}
.selected .num {
    padding-top: 7px;
    font-weight: 700;
}
.shade {
    width: 251px;
    padding: 5px;
    background: linear-gradient(#aaaeb2, #9da1a5);
}
.selected {
    border-radius: 3px;
    background: linear-gradient(#fff0bd, #ffe38c 30%, #ffe085 60%, #fffdf0 95%);
    box-shadow: inset 0 0 0 1px #e3b93e;
}
.selected .shade {
    border: 1px solid #d3aa3c;
    border-left: none;
    border-radius: 0 3px 3px 0;
    background: linear-gradient(#d2c6a0, #d8d8d0 90%);
    padding: 4px 4px 4px 5px;
}
.frame {
    position: relative;
    width: 241px;
    height: 182px;
    border: 1px solid #7f868f;
    box-shadow: inset 0 0 0 1px #fff;
    padding: 1px;
    overflow: hidden;
}
.cover {
    position: absolute;
    left: 119px;
    top: 1px;
    width: 97px;
    height: 163px;
    border: 1px solid #78a614;
    border-top: none;
    background-color: #f5f5f5;
}
.cover-photo {
    height: 59px;
    margin: 0 3px 0 1px;
    background-color: #71685a;
}
.cover-title {
    padding: 39px 0 0 6px;
    color: #90c600;
    font-size: 12px;
    font-weight: 400;
}
.cover-bar {
    height: 2px;
    margin: 40px 3px 0 2px;
    background-color: #90c600;
}
.card {
    position: absolute;
    left: 13px;
    top: 10px;
    width: 214px;
    height: 161px;
    padding: 28px 0 0 16px;
    border: 1px solid #000;
    background-color: #fff;
}
.card h3 {
    margin: 0;
    color: #90c600;
    font-size: 13.3px;
    font-weight: 400;
    line-height: 20px;
}
.card p {
    margin: 4px 0 0;
    color: #2e2a1c;
    font-family: "Noto Sans CJK SC", sans-serif;
    font-size: 8px;
    font-weight: 500;
    line-height: 9.6px;
}
.card .list {
    line-height: 11.6px;
    margin-top: 3px;
}
.flap {
    position: absolute;
    left: 119px;
    top: 1px;
    width: 97px;
    height: 19px;
    border: solid #78a614;
    border-width: 0 1px 1px;
    background: linear-gradient(#71685a, #71685a) 1px 0 / 91px 16px no-repeat #f5f5f5;
}

/* Editor */
.editor {
    position: relative;
    width: 1278px;
    padding-left: 4px;
    background-color: #f0f1f3;
}
.canvas {
    height: 775px;
    padding: 10px 0 0 293px;
    border: solid #8b9197;
    border-width: 0 0 1px 1px;
    background: linear-gradient(#cdd0d5, #b8bcc1);
    overflow: hidden;
}
.stage {
    width: 1000px;
    height: 763px;
    padding: 11px 0 0 14px;
    background: linear-gradient(#b1b5b9, #a3a7ab);
}
.slide {
    position: relative;
    width: 980px;
    height: 735px;
    box-shadow: -1px 1px 8px #92979c;
}
.slide .bg {
    overflow: visible;
}
.title-panel {
    position: absolute;
    left: 488px;
    top: -3px;
    width: 396px;
    height: 674px;
    border: 2px solid #78a614;
    background-color: #f4f4f4;
}
.photo {
    width: 376px;
    height: 247px;
    margin-left: 8px;
    background-color: #71685a;
}
h1 {
    height: 70px;
    margin: 158px 0 0 27px;
    padding-top: 2px;
    color: #90c600;
    font-size: 49px;
    font-weight: 200;
    line-height: 70px;
}
.subtitle {
    width: 357px;
    height: 136px;
    margin: 0 0 43px 16px;
    padding: 3px 0 0 10px;
    border: 1px dotted #333;
    color: #404040;
    font-size: 24.4px;
    line-height: 33px;
}
.bar {
    width: 376px;
    height: 8px;
    margin-left: 8px;
    background-color: #90c600;
}
.notes {
    height: 6px;
    margin-top: 4px;
    border: solid #8b9197;
    border-width: 1px 0 0 1px;
    background-color: #fff;
}

/* Watermark */
.watermark {
    position: absolute;
    left: 901px;
    top: 612px;
    filter: drop-shadow(0 0 1px #888);
}
.wm-art {
    opacity: 0.78;
    fill: #fff;
}
.wm-bai {
    stroke: #fff;
    stroke-width: 2px;
    font: 700 65px "Liberation Sans", sans-serif;
}
.wm-cn {
    font: 900 48px "Noto Sans CJK SC", sans-serif;
}
.wm-url {
    font: 500 35px "Noto Sans", sans-serif;
}
.wm-du {
    fill: #000;
    font: 700 37px "Inter", sans-serif;
}
```
